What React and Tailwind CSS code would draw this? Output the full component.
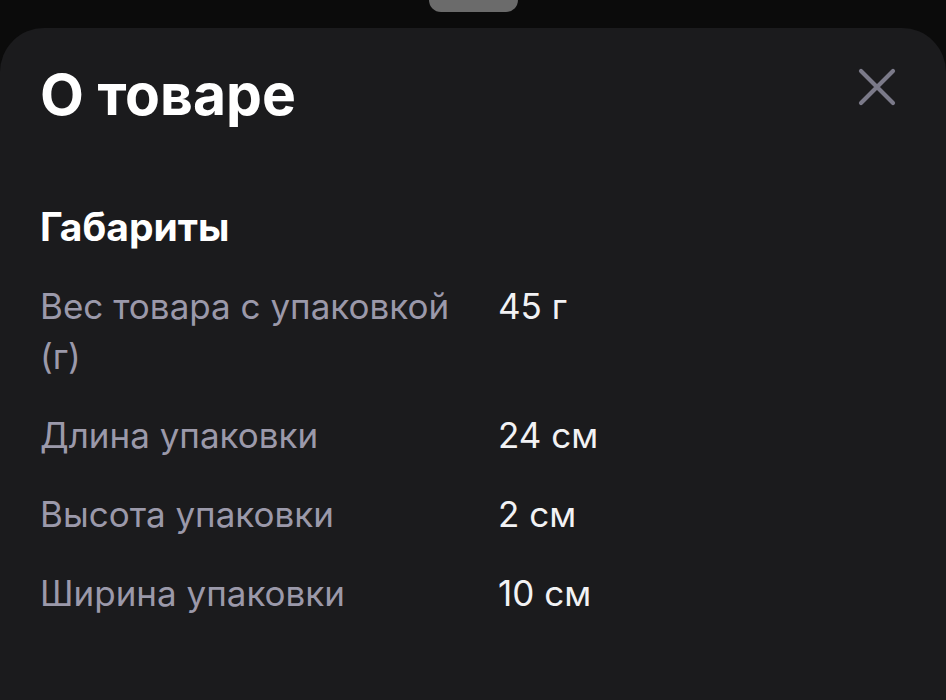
const rows = [
  { label: 'Вес товара с упаковкой (г)', value: '45 г' },
  { label: 'Длина упаковки', value: '24 см' },
  { label: 'Высота упаковки', value: '2 см' },
  { label: 'Ширина упаковки', value: '10 см' },
];

function CloseIcon() {
  return (
    <svg width="40" height="40" viewBox="0 0 40 40" className="text-[#7b7a89]">
      <path d="M4 4 L36 36 M36 4 L4 36" stroke="currentColor" strokeWidth="4.2" strokeLinecap="round" fill="none" />
    </svg>
  );
}

export default function App() {
  return (
    <div
      className="w-[946px] h-[700px] overflow-hidden bg-[#0b0b0b] flex flex-col"
      style={{ fontFamily: 'Inter, "Noto Sans", sans-serif' }}
    >
      {/* grabber */}
      <div className="h-[28px] flex justify-center">
        <div className="w-[89px] h-[12px] rounded-b-full bg-[#6b6b6b]" />
      </div>

      {/* sheet */}
      <div className="flex-1 bg-[#1b1b1d] rounded-t-[44px] px-[40px] pt-[35px]">
        <div className="flex items-start justify-between">
          <h1 className="text-[57px] leading-[64px] font-bold text-white">О товаре</h1>
          <div className="mt-[4px] mr-[9px]">
            <CloseIcon />
          </div>
        </div>

        <h2 className="mt-[78px] text-[39px] leading-[44px] font-bold text-white">Габариты</h2>

        <div className="mt-[32px] flex flex-col gap-[29px]">
          {rows.map((r) => (
            <div key={r.label} className="grid grid-cols-[430px_1fr] gap-x-[28px] text-[35px] leading-[50px]">
              <span className="text-[#9b99aa]">{r.label}</span>
              <span className="text-[#f2f2f4]">{r.value}</span>
            </div>
          ))}
        </div>
      </div>
    </div>
  );
}
